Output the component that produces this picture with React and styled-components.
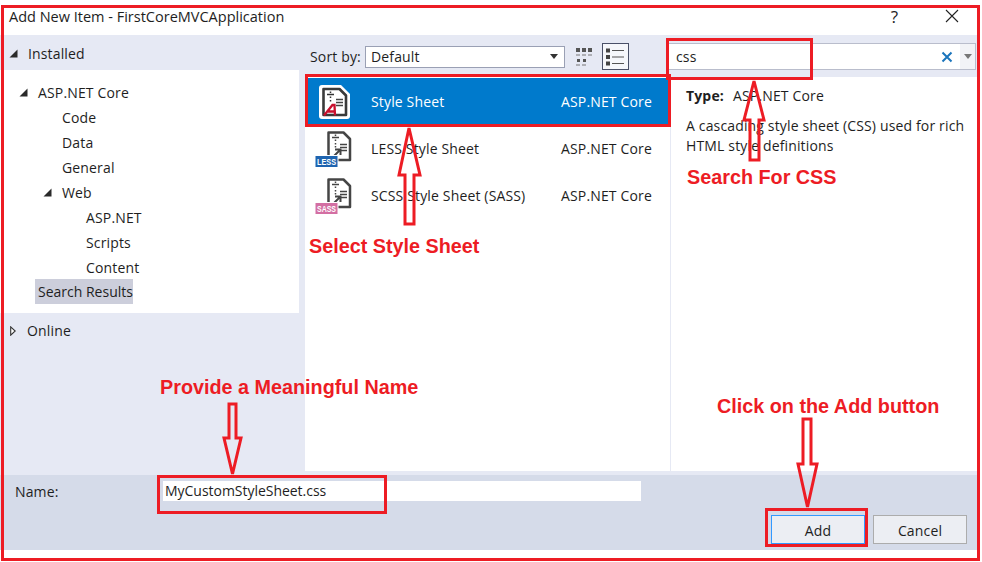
import React from "react";
import styled, { createGlobalStyle } from "styled-components";

const Global = createGlobalStyle`
  html, body { margin: 0; padding: 0; background: #fff; }
  body { font-family: "Open Sans", "Noto Sans", sans-serif; color: #1e1e1e; }
`;

const UI = `"Open Sans", "Noto Sans", sans-serif`;
const RED = "#ed1c24";

const Page = styled.div`
  position: relative;
  width: 982px;
  height: 562px;
  overflow: hidden;
  background: #fff;
  font-family: ${UI};
  font-size: 14px;
  letter-spacing: 0.15px;
`;
const TitleBar = styled.div`
  height: 35px;
  display: flex;
  align-items: center;
  padding: 0 2px 3px 9px;
  box-sizing: border-box;
  font-size: 14.5px;
  letter-spacing: 0;
`;
const TitleText = styled.div`
  flex: 1;
`;
const TitleBtn = styled.div`
  width: 57px;
  display: flex;
  justify-content: center;
  font-size: 17px;
  color: #222;
`;
const Main = styled.div`
  height: 440px;
  margin-right: 2px;
  display: flex;
  background: #e6e9f4;
`;
const Left = styled.div`
  width: 305px;
  display: flex;
  flex-direction: column;
`;
const GroupHead = styled.div`
  height: 35px;
  display: flex;
  align-items: center;
  padding: 2px 0 0 9px;
  box-sizing: border-box;
`;
const Tree = styled.div`
  height: 243px;
  margin-right: 6px;
  padding: 10px 0 0 0;
  box-sizing: border-box;
  background: #fff;
  display: flex;
  flex-direction: column;
`;
const TreeRow = styled.div`
  height: 25px;
  display: flex;
  align-items: center;
  padding-left: ${(p) => p.$indent}px;
  box-sizing: border-box;
`;
const TreeCaret = styled.svg`
  width: 9px;
  height: 9px;
  margin-right: 10px;
  flex: none;
`;
const SelectedNode = styled.span`
  height: 25px;
  line-height: 25px;
  padding: 0 0 0 3px;
  margin: 0 0 2px -3px;
  letter-spacing: 0;
  background: #cccedb;
`;
const OnlineHead = styled(GroupHead)`
  padding: 0 0 0 10px;
  height: 35px;
  gap: 11px;
`;
const Right = styled.div`
  flex: 1;
  display: flex;
  flex-direction: column;
  min-width: 0;
`;
const Toolbar = styled.div`
  height: 42px;
  display: flex;
  align-items: center;
  padding-top: 1px;
  box-sizing: border-box;
  padding-left: 5px;
`;
const SortLabel = styled.span`
  width: 55px;
  flex: none;
  white-space: nowrap;
`;
const Select = styled.div`
  width: 200px;
  height: 22px;
  box-sizing: border-box;
  border: 1px solid #9aa0b4;
  background: #fff;
  display: flex;
  align-items: center;
  justify-content: space-between;
  padding: 0 6px 0 5px;
`;
const ViewGrid = styled.svg`
  width: 18px;
  height: 18px;
  margin-left: 10px;
  flex: none;
`;
const ViewList = styled.div`
  width: 27px;
  height: 27px;
  box-sizing: border-box;
  margin-left: 9px;
  border: 1px solid #4a5068;
  background: #f6f7fb;
  display: flex;
  align-items: center;
  justify-content: center;
  flex: none;
`;
const SearchBox = styled.div`
  margin-left: 39px;
  width: 308px;
  height: 27px;
  box-sizing: border-box;
  border: 1px solid #b9bdcc;
  background: #fff;
  display: flex;
  align-items: center;
  padding-left: 7px;
`;
const SearchText = styled.span`
  flex: 1;
`;
const SearchClear = styled.svg`
  width: 12px;
  height: 12px;
  margin-right: 7px;
`;
const SearchDrop = styled.div`
  width: 15px;
  height: 100%;
  background: #f2f3f7;
  display: flex;
  align-items: center;
  justify-content: center;
`;
const Content = styled.div`
  flex: 1;
  display: flex;
  min-height: 0;
  height: 394px;
  margin-bottom: 4px;
`;
const List = styled.div`
  width: 365px;
  background: #fff;
  padding-top: 1px;
  flex: none;
`;
const Row = styled.div`
  height: 47px;
  display: flex;
  align-items: center;
  background: ${(p) => (p.$selected ? "#007acc" : "#fff")};
  color: ${(p) => (p.$selected ? "#fff" : "#1e1e1e")};
`;
const RowIcon = styled.svg`
  width: 40px;
  height: 40px;
  margin-left: 9px;
  flex: none;
`;
const RowName = styled.span`
  margin-left: 17px;
  width: 190px;
  flex: none;
  white-space: nowrap;
`;
const RowType = styled.span`
  white-space: nowrap;
`;
const Detail = styled.div`
  flex: 1;
  margin-left: 1px;
  background: #fff;
  padding: 8px 0 0 15px;
  white-space: nowrap;
`;
const TypeLine = styled.div`
  display: flex;
  height: 20px;
  align-items: center;
`;
const TypeLabel = styled.b`
  width: 47px;
  font-weight: 700;
`;
const Desc = styled.div`
  margin-top: 11px;
  line-height: 20px;
`;
const Footer = styled.div`
  height: 75px;
  margin-right: 2px;
  background: #d5dbe9;
  display: flex;
  flex-direction: column;
  padding: 6px 13px 0 15px;
  box-sizing: border-box;
`;
const NameRow = styled.div`
  display: flex;
  align-items: center;
  height: 20px;
`;
const NameLabel = styled.span`
  width: 148px;
  flex: none;
`;
const NameInput = styled.div`
  width: 478px;
  height: 20px;
  line-height: 20px;
  background: #fff;
  padding-left: 2px;
  box-sizing: border-box;
  letter-spacing: -0.03px;
`;
const Buttons = styled.div`
  display: flex;
  justify-content: flex-end;
  gap: 8px;
  margin-top: 14px;
`;
const Button = styled.div`
  width: 94px;
  height: 29px;
  padding-top: 1px;
  box-sizing: border-box;
  background: #eceef3;
  border: 1px solid ${(p) => (p.$primary ? "#3399ff" : "#acacac")};
  display: flex;
  align-items: center;
  justify-content: center;
`;
const Overlay = styled.svg`
  position: absolute;
  inset: 0;
  pointer-events: none;
`;
const Frame = styled.div`
  position: absolute;
  left: ${(p) => p.$x}px;
  top: ${(p) => p.$y}px;
  width: ${(p) => p.$w}px;
  height: ${(p) => p.$h}px;
  box-sizing: border-box;
  border: 3px solid ${RED};
`;
const Note = styled.div`
  position: absolute;
  left: ${(p) => p.$x}px;
  top: ${(p) => p.$y}px;
  font-family: "Liberation Sans", Arial, sans-serif;
  font-weight: 700;
  font-size: 19.8px;
  line-height: 22px;
  letter-spacing: 0;
  color: ${RED};
  white-space: nowrap;
`;

const Solid = () => (
  <TreeCaret viewBox="0 0 9 9">
    <path d="M8.5 0.5V8.5H0.5Z" fill="#2a2a2a" />
  </TreeCaret>
);

const SelectedIcon = () => (
  <RowIcon viewBox="0 0 40 40">
    <path d="M8 3H27L36 12V34Q36 37 33 37H8Q5 37 5 34V6Q5 3 8 3Z" fill="#fff" />
    <path d="M9.500 7H25.500L32 13.500V33H9.500Z" fill="#fff" stroke="#3a3a3a" strokeWidth="2.6" strokeLinejoin="round" />
    <path d="M13 12.500h7M16.500 9.500v1.500M16.500 14.500v1.500M16.500 18v1.500" stroke="#333" strokeWidth="1.5" fill="none" />
    <path d="M22 17.500h7M22 20.500h7M22 23.500h7" stroke="#444" strokeWidth="1.5" fill="none" />
    <path d="M10 33.500L18.500 23H20.500L21 33.500M14 29.500H20.500" fill="none" stroke="#c8102e" strokeWidth="2.3" />
  </RowIcon>
);

const BadgeIcon = ({ label, color }) => (
  <RowIcon viewBox="0 0 40 40">
    <path d="M14.500 3.500H29.500L36 10V31H14.500Z" fill="#fff" stroke="#454545" strokeWidth="2.500" strokeLinejoin="round" />
    <path d="M18 8.500h7M21.500 5.500v1.500M21.500 10.500v1.500M21.500 14v1.500M21.500 17v1.500" stroke="#444" strokeWidth="1.5" fill="none" />
    <path d="M26 15.500h7M26 18.500h7M26 21.500h7" stroke="#444" strokeWidth="1.5" fill="none" />
    <path d="M19 28L25.500 21.500M21 20.500h5.500v5.500" fill="none" stroke="#444" strokeWidth="2" />
    <rect x="0.500" y="26" width="24" height="13" fill="#fff" />
    <rect x="1.500" y="27" width="22" height="11" fill={color} />
    <text x="3" y="36" textLength="19" lengthAdjust="spacingAndGlyphs" fontFamily="'Liberation Sans', sans-serif" fontWeight="700" fontSize="9.500" letterSpacing="0" fill="#fff">
      {label}
    </text>
  </RowIcon>
);

const items = [
  { name: "LESS Style Sheet", label: "LESS", color: "#1e64b0" },
  { name: "SCSS Style Sheet (SASS)", label: "SASS", color: "#d36fa3" },
];

export default function App() {
  return (
    <Page>
      <Global />
      <TitleBar>
        <TitleText>Add New Item - FirstCoreMVCApplication</TitleText>
        <TitleBtn>?</TitleBtn>
        <TitleBtn>
          <svg width="14" height="14" viewBox="0 0 14 14">
            <path d="M1 1L13 13M13 1L1 13" stroke="#222" strokeWidth="1.1" />
          </svg>
        </TitleBtn>
      </TitleBar>
      <Main>
        <Left>
          <GroupHead>
            <Solid />
            <span>Installed</span>
          </GroupHead>
          <Tree>
            <TreeRow $indent={19}>
              <Solid />
              ASP.NET Core
            </TreeRow>
            <TreeRow $indent={62}>Code</TreeRow>
            <TreeRow $indent={62}>Data</TreeRow>
            <TreeRow $indent={62}>General</TreeRow>
            <TreeRow $indent={43}>
              <Solid />
              Web
            </TreeRow>
            <TreeRow $indent={86}>ASP.NET</TreeRow>
            <TreeRow $indent={86}>Scripts</TreeRow>
            <TreeRow $indent={86}>Content</TreeRow>
            <TreeRow $indent={38}>
              <SelectedNode>Search Results</SelectedNode>
            </TreeRow>
          </Tree>
          <OnlineHead>
            <svg width="6" height="10" viewBox="0 0 6 10">
              <path d="M0.7 0.8L5.2 5L0.7 9.2Z" fill="#fff" stroke="#333" strokeWidth="1.1" />
            </svg>
            <span>Online</span>
          </OnlineHead>
        </Left>
        <Right>
          <Toolbar>
            <SortLabel>Sort by:</SortLabel>
            <Select>
              <span>Default</span>
              <svg width="8" height="5" viewBox="0 0 8 5">
                <path d="M0 0H8L4 5Z" fill="#333" />
              </svg>
            </Select>
            <ViewGrid viewBox="0 0 18 18">
              <path d="M1 0h4v4H1zM7 0h4v4H7zM13 0h4v4h-4zM2 11h3v3H2zM8 11h3v3H8z" fill="#555" />
              <path d="M1 7h4M7 7h4M13 7h4M1 17h4M7 17h4" stroke="#777" strokeWidth="1.2" />
            </ViewGrid>
            <ViewList>
              <svg width="19" height="18" viewBox="0 0 19 18">
                <path d="M0 0.500h4v4H0zM0 7h4v4H0zM0 13.500h4v4H0z" fill="#444" />
                <path d="M6 2.500h12M6 9h12M6 15.500h12" stroke="#555" strokeWidth="1.2" />
              </svg>
            </ViewList>
            <SearchBox>
              <SearchText>css</SearchText>
              <SearchClear viewBox="0 0 12 12">
                <path d="M1.500 1.500L10.500 10.500M10.500 1.500L1.500 10.500" stroke="#1b75bc" strokeWidth="2" />
              </SearchClear>
              <SearchDrop>
                <svg width="8" height="5" viewBox="0 0 8 5">
                  <path d="M0 0H8L4 5Z" fill="#777" />
                </svg>
              </SearchDrop>
            </SearchBox>
          </Toolbar>
          <Content>
            <List>
              <Row $selected>
                <SelectedIcon />
                <RowName>Style Sheet</RowName>
                <RowType>ASP.NET Core</RowType>
              </Row>
              {items.map((it) => (
                <Row key={it.name}>
                  <BadgeIcon label={it.label} color={it.color} />
                  <RowName>{it.name}</RowName>
                  <RowType>ASP.NET Core</RowType>
                </Row>
              ))}
            </List>
            <Detail>
              <TypeLine>
                <TypeLabel>Type:</TypeLabel>
                <span>ASP.NET Core</span>
              </TypeLine>
              <Desc>
                A cascading style sheet (CSS) used for rich
                <br />
                HTML style definitions
              </Desc>
            </Detail>
          </Content>
        </Right>
      </Main>
      <Footer>
        <NameRow>
          <NameLabel>Name:</NameLabel>
          <NameInput>MyCustomStyleSheet.css</NameInput>
        </NameRow>
        <Buttons>
          <Button $primary>Add</Button>
          <Button>Cancel</Button>
        </Buttons>
      </Footer>

      <Frame $x={1} $y={5} $w={979} $h={556} />
      <Frame $x={305} $y={74} $w={366} $h={53} />
      <Frame $x={666} $y={38} $w={147} $h={42} />
      <Frame $x={157} $y={475} $w={230} $h={39} />
      <Frame $x={765} $y={508} $w={103} $h={39} />
      <Overlay width="982" height="562" viewBox="0 0 982 562">
        <g fill="none" stroke={RED} strokeWidth="3" strokeLinejoin="miter">
          <path d="M409 128L399 175H405V224H414V175H420Z" />
          <path d="M754 81L744 120H750V160H759V120H764Z" />
          <path d="M229 404H236V438H241L232.500 474L224 438H229Z" />
          <path d="M803 419H811V464H817L807.500 507L798 464H803Z" />
        </g>
      </Overlay>
      <Note $x={309} $y={235}>Select Style Sheet</Note>
      <Note $x={687} $y={166}>Search For CSS</Note>
      <Note $x={160} $y={376}>Provide a Meaningful Name</Note>
      <Note $x={717} $y={395}>Click on the Add button</Note>
    </Page>
  );
}
